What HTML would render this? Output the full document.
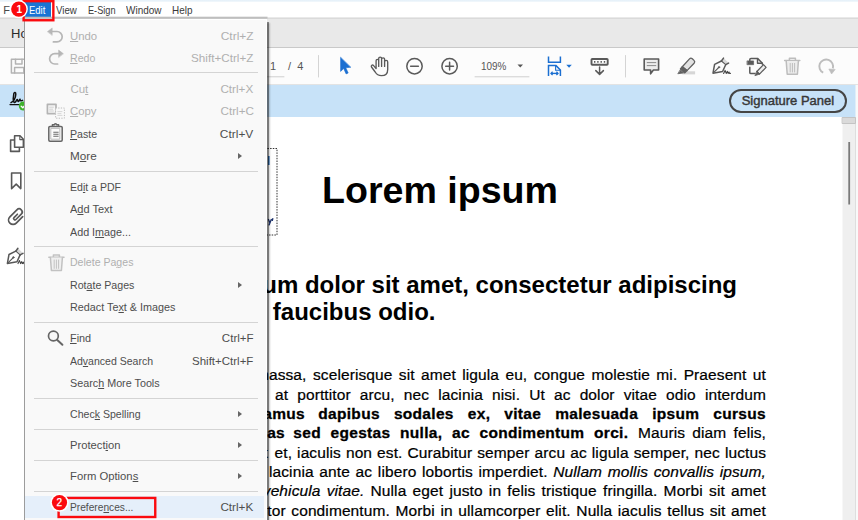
<!DOCTYPE html>
<html>
<head>
<meta charset="utf-8">
<title>Acrobat - Edit menu</title>
<style>
*{box-sizing:border-box;margin:0;padding:0}
html,body{width:858px;height:520px;overflow:hidden;background:#fff}
body{position:relative;font-family:"Liberation Sans",sans-serif;color:#444}
.abs{position:absolute}
/* top chrome */
#menubar{left:0;top:0;width:858px;height:18px;background:#fff}
#menubar span{position:absolute;top:3px;font-size:11px;line-height:14px;color:#3a3a3a;white-space:nowrap;transform-origin:0 50%;display:inline-block}
#topstrip{left:0;top:0;width:858px;height:2px;background:linear-gradient(#e3eff9,#f3f8fc)}
#tabbar{left:0;top:18px;width:858px;height:30px;background:#e9e9e9;border-bottom:1px solid #c9c9c9}
#tabbar span{position:absolute;left:11px;top:7.500px;font-size:13px;line-height:16px;color:#2a2a2a}
#toolbar{left:0;top:48px;width:858px;height:37px;background:#fcfcfc;border-bottom:1px solid #e3e3e3}
#sigbar{left:0;top:85px;width:858px;height:32px;background:#c7e2f8}
#docarea{left:0;top:117px;width:858px;height:403px;background:#fff}
#scroll{left:842px;top:117px;width:16px;height:403px;background:#f0f0f0}
#sigbtn{left:729px;top:89.3px;width:118px;height:24px;border:2px solid #454545;border-radius:12px;font-size:13.2px;line-height:20px;text-align:center;color:#383838;white-space:nowrap;-webkit-text-stroke:.45px #383838}
#sigbtn span{display:inline-block;transform:scaleX(.985);transform-origin:50% 50%}
.tbt{font-size:11px;line-height:14px;color:#555;white-space:nowrap}
/* document text */
.h1{left:114px;top:167px;width:652px;text-align:center;font-weight:bold;font-size:37.6px;line-height:46px;color:#000;white-space:nowrap}
.h2{font-weight:bold;font-size:24px;line-height:28px;color:#000;white-space:nowrap}
.ln{font-size:15.5px;line-height:19px;color:#000;text-align:justify;text-align-last:justify;white-space:nowrap;letter-spacing:.1px;-webkit-text-stroke:.22px #000}
.ln b,.lp b{letter-spacing:.3px;-webkit-text-stroke:.3px #000}
.lp{font-size:15.5px;line-height:19px;color:#000;white-space:nowrap;text-align:right;letter-spacing:.1px;-webkit-text-stroke:.22px #000}
/* menu */
#menu{left:24px;top:19px;width:243px;height:501px;background:#f9f9f9;border-left:1px solid #9c9c9c;border-right:1px solid #fff;border-top:1px solid #fff;box-shadow:2px 3px 0 0 rgba(0,0,0,.4),3px 4px 1.500px rgba(0,0,0,.2)}
#hl{position:absolute;left:0;top:475.500px;width:239px;height:22.500px;background:#e5effa}
.mi{position:absolute;left:0;width:242px;height:22px;font-size:11.5px;line-height:22px;color:#4e4e4e;white-space:nowrap}
.mi .t{position:absolute;left:45.4px;top:0;display:inline-block;transform-origin:0 50%}
.mi .k{position:absolute;right:13.5px;top:0;display:inline-block;transform-origin:100% 50%}
.mi.d{color:#b0b0b0}
.mi u{text-decoration:underline;text-decoration-thickness:1px;text-underline-offset:.8px}
.sep{position:absolute;left:9px;width:224px;height:1px;background:#d4d4d4}
.arr{position:absolute;left:213px;top:8px;width:0;height:0;border-left:4px solid #666;border-top:3px solid transparent;border-bottom:3px solid transparent}
</style>
</head>
<body>
<div class="abs" id="menubar">
  <span style="left:3.200px;color:#4a4a4a">F</span>
  <span style="left:56.3px;transform:scaleX(0.879)">View</span>
  <span style="left:87.6px;transform:scaleX(0.833)">E-Sign</span>
  <span style="left:125.9px;transform:scaleX(0.907)">Window</span>
  <span style="left:172.1px;transform:scaleX(0.902)">Help</span>
</div>
<div class="abs" id="topstrip"></div>
<div class="abs" id="tabbar"><span>Ho</span></div>
<div class="abs" id="toolbar"></div>
<div class="abs" id="sigbar"></div>
<div class="abs" id="docarea"></div>
<div class="abs" id="sigbtn"><span>Signature Panel</span></div>

<!-- toolbar text -->
<div class="abs tbt" style="left:270px;top:59px">1</div>
<div class="abs tbt" style="left:288px;top:59px">/&nbsp; 4</div>
<div class="abs tbt" style="left:481px;top:59px;transform:scaleX(.9);transform-origin:0 50%">109%</div>

<!-- chrome icons -->
<svg class="abs" style="left:0;top:0" width="858" height="520" viewBox="0 0 858 520" fill="none" stroke-linecap="round" stroke-linejoin="round">
  <rect x="0" y="17.500" width="858" height="1.200" fill="#d3d3d3" stroke="none"/>
  <!-- page-number and zoom underlines, dividers -->
  <path d="M262 76.8H284M475 76.8H529" stroke="#cfcfcf" stroke-width="1"/>
  <path d="M318.5 55.5V77M625.5 55.5V77" stroke="#d4d4d4" stroke-width="1"/>
  <!-- save (disabled) -->
  <g stroke="#b4b4b4" stroke-width="1.5">
    <path d="M11.4 59.2H24.5L27 61.7V73H11.4Z"/>
    <path d="M15.5 59.2V64H22V59.2"/>
    <path d="M14.6 73V67.6H23.8V73"/>
  </g>
  <!-- select arrow -->
  <path d="M340.6 57.6V71.4L343.7 68.5L346.1 73.9L348.2 73L345.8 67.7L350.5 67.3Z" fill="#1b6fd1" stroke="#1b6fd1" stroke-width=".6"/>
  <!-- hand -->
  <g stroke="#5a5a5a" stroke-width="1.350">
    <path d="M376.100 68.400V60.700a1.300 1.300 0 0 1 2.600 0V66.400M378.700 60.600V58.500a1.450 1.450 0 0 1 2.900 0V66.400M381.600 59.300a1.500 1.500 0 0 1 3 0V66.400M384.600 62a1.550 1.550 0 0 1 3.100 0V69.400c0 4-2.500 6.200-6.300 6.200c-3.200 0-4.900-1.400-6.200-3.600L371.500 67c-.900-1.600 1-2.700 2.100-1.400L376.100 68.600"/>
  </g>
  <!-- zoom out / in -->
  <g stroke="#5a5a5a" stroke-width="1.5">
    <circle cx="414.5" cy="66.2" r="7.7"/>
    <path d="M410.6 66.2H418.4"/>
    <circle cx="449.6" cy="66.2" r="7.7"/>
    <path d="M445.7 66.2H453.5M449.6 62.3V70.1"/>
  </g>
  <!-- zoom dropdown caret -->
  <path d="M517.5 64.5H523L520.25 67.6Z" fill="#555"/>
  <!-- fit width (blue) -->
  <g stroke="#1b6fd1" stroke-width="1.5" stroke-linecap="butt" stroke-linejoin="miter">
    <path d="M548.5 56.6V62.2H560.4V56.6"/>
    <path d="M548.5 76V65.6H556L560.4 70V76"/>
    <path d="M555.6 65.8V70.3H560.2" stroke-width="1.1"/>
    <path d="M551 73.400H558" stroke-width="1.400"/>
    <path d="M552.6 71.8L551 73.4L552.6 75M556.4 71.8L558 73.4L556.4 75" stroke-width="1.300"/>
  </g>
  <path d="M566.3 64.7H571.8L569.05 67.7Z" fill="#1b6fd1"/>
  <!-- scrolling/keyboard down -->
  <g stroke="#5a5a5a" stroke-width="1.5">
    <rect x="591.500" y="59" width="16.200" height="5.800" rx=".800" stroke-width="1.900"/>
    <path d="M599.6 67V74M595.8 70.6L599.6 74.4L603.4 70.6"/>
  </g>
  <path d="M594 61.900h1.400M597.200 61.900h1.400M600.500 61.900h1.400M603.800 61.900h1.400" stroke="#5a5a5a" stroke-width="1.600" stroke-linecap="butt"/>
  <!-- comment -->
  <path d="M644.2 59H658.6V70H653.4L650.6 73.8V70H644.2Z" fill="#ececec" stroke="#5a5a5a" stroke-width="1.6"/>
  <path d="M647.2 62.6H655.8M647.2 65.6H655.8" stroke="#8a8a8a" stroke-width="1"/>
  <!-- highlighter -->
  <rect x="682.400" y="71.300" width="12.700" height="3.100" fill="#d6d6d6" stroke="none"/>
  <g stroke="#606060" stroke-width="1.300">
    <path d="M682.300 66.700L689.500 58.900a2 2 0 0 1 2.800 -.100l1.700 1.600a2 2 0 0 1 .100 2.800L687 70.600Z" fill="#e2e2e2"/>
    <path d="M682.300 66.700L687 70.600L684.800 72.900L680.400 69Z" fill="#606060"/>
    <path d="M680.400 70.200L683.400 72.900L678.200 73.700Z" fill="#606060" stroke-width=".800"/>
  </g>
  <!-- fill & sign pen -->
  <path d="M721.500 60.800L723.600 58L728.700 63.100L725.800 64.900Z" fill="#d9d9d9" stroke="none"/>
  <g stroke="#5a5a5a" stroke-width="1.500">
    <path d="M721.400 61L714.600 64.300L713 73.200L722.600 71.500L725.700 64.700"/>
    <path d="M721.400 61L723.500 58.100M725.700 64.700L728.600 63.100"/>
    <path d="M721.400 61L725.700 64.700" stroke-width="1.100"/>
    <path d="M713.600 72.700L718.600 67.600" stroke-width="1.200"/>
    <circle cx="719" cy="67.200" r=".800" fill="#5a5a5a" stroke-width=".600"/>
    <path d="M723.600 73.400l1.500-3l1.100 3l1.200-2l.700 2l.900-1.400l.500 1.400h.900" stroke-width="1.100" stroke="#444"/>
  </g>
  <!-- edit pdf doc -->
  <g stroke="#5a5a5a" stroke-width="1.500">
    <path d="M749.800 60.400V59.600a1.200 1.200 0 0 1 1.200 -1.200H757.500L762.400 63.300V64.200"/>
    <path d="M757.500 58.600V63.200H762.200" stroke-width="1.400"/>
    <path d="M749.800 67.200V72.400a1.200 1.200 0 0 0 1.200 1.200H754.800"/>
    <rect x="747.300" y="60.900" width="6.300" height="3.800" fill="#5a5a5a" stroke-width=".600"/>
    <path d="M763.500 64.700L766.100 67.300L759.500 74.100L756.900 71.500Z" fill="#eee" stroke-width="1.200"/>
    <path d="M756.900 71.500L759.500 74.100L755.300 75.600Z" fill="#5a5a5a" stroke-width=".800"/>
  </g>
  <!-- delete (disabled) -->
  <g stroke="#bdbdbd" stroke-width="1.5">
    <path d="M784.6 60.6H799.8"/>
    <path d="M789.4 60.4V58.3H795.4V60.4"/>
    <path d="M786.2 61L787.2 74.2H797.4L798.4 61" fill="#ededed"/>
    <path d="M790.2 63.4V72M792.4 63.4V72M794.6 63.4V72" stroke-width="1"/>
  </g>
  <!-- rotate (disabled) -->
  <g stroke="#bdbdbd" stroke-width="1.9" stroke-linecap="butt">
    <path d="M823.2 72.6A6.9 6.9 0 1 1 832.8 68.4"/>
    <path d="M828.8 69L835.2 69.4L831.6 74Z" fill="#bdbdbd" stroke-width=".6"/>
  </g>
  <!-- signature badge -->
  <path d="M11 102.6c2.2-1.2 4.6-4.8 4.8-8.4c.1-2-1.500-2.400-2-.4c-.6 2.800-.6 6.600 0 8.200c.5 1 1.600 .4 2.400-1.200c.6-1.200 1.200-1.800 1.400-.6c.2 1.400 .8 1.800 1.600 .4l.8-1.400c.2 1.600 1 2 2.600 1.200" stroke="#111" stroke-width="1.5"/>
  <path d="M10 104.6H19.4" stroke="#111" stroke-width="1.3"/>
  <circle cx="23.4" cy="106" r="4.6" fill="#3fb22c" stroke="none"/>
  <path d="M21.2 106.2L22.8 107.8L25.6 104.6" stroke="#fff" stroke-width="1.3"/>
  <!-- nav pane icons -->
  <g stroke="#585858" stroke-width="1.6">
    <path d="M14 140H10.600V151.400H19.400V148.400"/>
    <path d="M14.600 135.800H20L23.400 139.200V147.200H14.600Z" fill="#fff"/>
    <path d="M19.800 136V139.600H23.200" stroke-width="1.100"/>
    <path d="M11.600 173H20.800V188.600L16.200 184.200L11.600 188.600Z"/>
    <path d="M22.68 216.71L16.25 223.15A4.5 4.5 0 0 1 9.89 216.78L16.89 209.78A3.1 3.1 0 0 1 21.27 214.17L15.93 219.51A1.35 1.35 0 0 1 14.02 217.60L17.38 214.24" stroke-width="1.700"/>
  </g>
  <g transform="translate(-705.600 190.200)">
  <path d="M721.500 60.800L723.600 58L728.700 63.100L725.800 64.900Z" fill="#d9d9d9" stroke="none"/>
  <g stroke="#585858" stroke-width="1.500">
    <path d="M721.400 61L714.600 64.300L713 73.200L722.600 71.500L725.700 64.700"/>
    <path d="M721.400 61L723.500 58.100M725.700 64.700L728.600 63.100"/>
    <path d="M721.400 61L725.700 64.700" stroke-width="1.100"/>
    <path d="M713.600 72.700L718.600 67.600" stroke-width="1.200"/>
    <circle cx="719" cy="67.200" r=".800" fill="#585858" stroke-width=".600"/>
    <path d="M723.600 73.400l1.500-3l1.100 3l1.200-2l.700 2l.900-1.400l.500 1.400h.900" stroke-width="1.100" stroke="#444"/>
  </g>
  </g>
  <!-- scrollbar bits -->
  <rect x="842.500" y="117" width="13" height="403" fill="#efefef" stroke="none"/>
  <rect x="855.500" y="85" width="2.500" height="435" fill="#f9f9f9" stroke="none"/>
  <rect x="855" y="117" width="1" height="403" fill="#dedede" stroke="none"/>
  <rect x="842.500" y="117.500" width="13" height="6" fill="#dadada" stroke="#c4c4c4" stroke-width="1"/>
  <path d="M849.200 142V204.500" stroke="#7a7a7a" stroke-width="1.800" stroke-linecap="butt"/>
  <!-- dotted field on page -->
  <path d="M262 148.500H277V235H262" stroke="#333" stroke-width="1" stroke-dasharray="1.500 1.200" stroke-linecap="butt"/>
  <path d="M268.800 156V165" stroke="#2a6db5" stroke-width="1.600" stroke-linecap="butt"/>
  <path d="M268.500 219.500l1.400 3.400l1.400-3.400M269.900 222.900l-.8 2M272.800 218.600l-.4 1.800" stroke="#1a2f6a" stroke-width="1.300"/>
</svg>

<!-- document -->
<div class="abs h1">Lorem ipsum</div>
<div class="abs h2" style="top:270.500px;right:121px">Lorem ipsum dolor sit amet, consectetur adipiscing</div>
<div class="abs h2" style="top:297.500px;left:124.800px">elit. Nunc ac faucibus odio.</div>

<div class="abs lp" style="top:365.400px;right:551.500px">Vestibulum neque massa,</div>
<div class="abs ln" style="top:365.400px;left:313px;width:453px">scelerisque sit amet ligula eu, congue molestie mi. Praesent ut</div>
<div class="abs ln" style="top:384.700px;left:275px;width:491px">at porttitor arcu, nec lacinia nisi. Ut ac dolor vitae odio interdum</div>
<div class="abs lp" style="top:404.100px;right:553px"><b>condimentum. Vivamus</b></div>
<div class="abs ln" style="top:404.100px;left:318.300px;width:447.700px"><b>dapibus sodales ex, vitae malesuada ipsum cursus</b></div>
<div class="abs lp" style="top:423.400px;right:573px"><b>convallis. Maecenas</b></div>
<div class="abs ln" style="top:423.400px;left:293.300px;width:335px"><b>sed egestas nulla, ac condimentum orci.</b></div>
<div class="abs ln" style="top:423.400px;left:638px;width:128px">Mauris diam felis,</div>
<div class="abs lp" style="top:442.800px;right:590px">vulputate ac suscipit</div>
<div class="abs ln" style="top:442.800px;left:274.500px;width:491.500px">et, iaculis non est. Curabitur semper arcu ac ligula semper, nec luctus</div>
<div class="abs ln" style="top:462.100px;left:269px;width:497px">lacinia ante ac libero lobortis imperdiet. <i>Nullam mollis convallis ipsum,</i></div>
<div class="abs ln" style="top:481.400px;left:262.800px;width:503.200px"><i>vehicula vitae.</i> Nulla eget justo in felis tristique fringilla. Morbi sit amet</div>
<div class="abs ln" style="top:500.800px;left:267.300px;width:498.700px">tor condimentum. Morbi in ullamcorper elit. Nulla iaculis tellus sit amet</div>

<!-- menu -->
<div class="abs" id="menu">
  <div id="hl"></div>
  <div class="mi d" style="top:4.5px"><span class="t" style="transform:scaleX(0.989)"><u>U</u>ndo</span><span class="k" style="transform:scaleX(1.040)">Ctrl+Z</span></div>
  <div class="mi d" style="top:26.8px"><span class="t" style="transform:scaleX(0.920)"><u>R</u>edo</span><span class="k" style="transform:scaleX(1.015)">Shift+Ctrl+Z</span></div>
  <div class="mi d" style="top:57.9px"><span class="t" style="transform:scaleX(1.000)">Cu<u>t</u></span><span class="k" style="transform:scaleX(1.019)">Ctrl+X</span></div>
  <div class="mi d" style="top:80.4px"><span class="t" style="transform:scaleX(0.987)"><u>C</u>opy</span><span class="k" style="transform:scaleX(1.015)">Ctrl+C</span></div>
  <div class="mi" style="top:102.5px"><span class="t" style="transform:scaleX(0.924)"><u>P</u>aste</span><span class="k" style="transform:scaleX(1.035)">Ctrl+V</span></div>
  <div class="mi" style="top:124.8px"><span class="t" style="transform:scaleX(1.019)">M<u>o</u>re</span><i class="arr"></i></div>
  <div class="mi" style="top:155.9px"><span class="t" style="transform:scaleX(0.917)">Ed<u>i</u>t a PDF</span></div>
  <div class="mi" style="top:178.4px"><span class="t" style="transform:scaleX(0.956)">A<u>d</u>d Text</span></div>
  <div class="mi" style="top:200.5px"><span class="t" style="transform:scaleX(0.935)">Add I<u>m</u>age...</span></div>
  <div class="mi d" style="top:231.4px"><span class="t" style="transform:scaleX(0.918)">Delete Pa<u>g</u>es</span></div>
  <div class="mi" style="top:253.9px"><span class="t" style="transform:scaleX(0.924)">Rot<u>a</u>te Pages</span><i class="arr"></i></div>
  <div class="mi" style="top:276.4px"><span class="t" style="transform:scaleX(0.939)">Redact Te<u>x</u>t &amp; Images</span></div>
  <div class="mi" style="top:307.3px"><span class="t" style="transform:scaleX(0.943)"><u>F</u>ind</span><span class="k" style="transform:scaleX(1.006)">Ctrl+F</span></div>
  <div class="mi" style="top:329.8px"><span class="t" style="transform:scaleX(0.914)">Ad<u>v</u>anced Search</span><span class="k" style="transform:scaleX(0.999)">Shift+Ctrl+F</span></div>
  <div class="mi" style="top:351.9px"><span class="t" style="transform:scaleX(0.937)">Searc<u>h</u> More Tools</span></div>
  <div class="mi" style="top:383.3px"><span class="t" style="transform:scaleX(0.919)">Chec<u>k</u> Spelling</span><i class="arr"></i></div>
  <div class="mi" style="top:413.8px"><span class="t" style="transform:scaleX(0.975)">Protect<u>i</u>on</span><i class="arr"></i></div>
  <div class="mi" style="top:445.2px"><span class="t" style="transform:scaleX(0.980)">Form Option<u>s</u></span><i class="arr"></i></div>
  <div class="mi" style="top:475.5px"><span class="t" style="transform:scaleX(0.886)">Prefere<u>n</u>ces...</span><span class="k" style="transform:scaleX(1.019)">Ctrl+K</span></div>
  <div class="sep" style="top:52.0px"></div>
  <div class="sep" style="top:150.7px"></div>
  <div class="sep" style="top:226.2px"></div>
  <div class="sep" style="top:302.0px"></div>
  <div class="sep" style="top:377.9px"></div>
  <div class="sep" style="top:409.0px"></div>
  <div class="sep" style="top:439.6px"></div>
  <div class="sep" style="top:470.7px"></div>
  <svg class="abs" style="left:-25px;top:-20px" width="268" height="521" viewBox="0 0 268 521" fill="none" stroke-linecap="round" stroke-linejoin="round">
    <!-- undo / redo -->
    <g stroke="#b6b6b6" stroke-width="1.700">
      <path d="M51 31.500H57A5.200 5.200 0 0 1 57 41.900H53.400"/>
      <path d="M47.600 31.500L52.200 27.900V35.100Z" fill="#b6b6b6" stroke-width=".5"/>
      <path d="M60 53.600H54.800A5.200 5.200 0 0 0 54.800 64H57.600"/>
      <path d="M63.200 53.600L58.600 50V57.200Z" fill="#b6b6b6" stroke-width=".5"/>
    </g>
    <!-- copy (disabled) -->
    <rect x="47.400" y="104.300" width="8.600" height="9.300" stroke="#b4b4b4" stroke-width="1.700" fill="#f6f6f6"/>
    <path d="M49.600 107.200H53.400M49.600 109.200H52.600M49.600 111H53.400" stroke="#cfcfcf" stroke-width=".9"/>
    <rect x="55.600" y="108" width="8.800" height="10.200" stroke="#bdbdbd" stroke-width="1" stroke-dasharray="1.300 1.300" fill="#f9f9f9" stroke-linecap="butt"/>
    <path d="M57.800 111.600H62M57.800 113.600H61M57.800 115.400H62" stroke="#d4d4d4" stroke-width=".9"/>
    <!-- paste -->
    <g stroke="#666" stroke-width="1.500">
      <rect x="48.800" y="126.400" width="13.400" height="14.800" rx="1.200"/>
      <path d="M52.400 126.200V124.800H54.400a1.100 1.100 0 0 1 2.200 0H58.600V126.200"/>
      <rect x="51.200" y="128.400" width="8.600" height="10.800" stroke="#b9b9b9" stroke-width=".900" fill="#fcfcfc"/>
      <path d="M53.300 132.200H58.600M53.300 134.200H58.600M53.300 136.200H58.600" stroke="#6a6a6a" stroke-width="1.100" stroke-linecap="butt"/>
    </g>
    <!-- delete pages (disabled) -->
    <g stroke="#c2c2c2" stroke-width="1.500">
      <path d="M48.800 257.200H64"/>
      <path d="M53.400 257V254.900H59.400V257"/>
      <path d="M50.400 257.600L51.400 270.400H61.400L62.400 257.600" fill="#f0f0f0"/>
      <path d="M54.200 260V268.400M56.400 260V268.400M58.600 260V268.400" stroke-width="1"/>
    </g>
    <!-- find -->
    <circle cx="53.400" cy="336" r="4.900" stroke="#666" stroke-width="1.700"/>
    <path d="M57 339.800L62.400 344.800" stroke="#666" stroke-width="2"/>
  </svg>
</div>

<!-- annotations -->
<div class="abs" style="left:24.800px;top:2.300px;width:26.300px;height:15.300px;background:#1a74d4"></div>
<div class="abs" style="left:29.400px;top:3px;font-size:11px;line-height:14px;color:#fff;white-space:nowrap;transform:scaleX(0.859);transform-origin:0 50%">Edit</div>
<svg class="abs" style="left:0;top:0" width="858" height="520" viewBox="0 0 858 520" fill="none">
  <rect x="24" y="16.700" width="243.500" height="2" fill="#bebebe" stroke="none"/>
  <rect x="23.600" y="1.150" width="29.750" height="19.100" stroke="#fb0a0e" stroke-width="2.400"/>
  <circle cx="18.800" cy="9.100" r="9.100" fill="#fff"/>
  <circle cx="18.800" cy="9.100" r="7.650" fill="#fb0a0e"/>
  <text x="19.300" y="13" font-family="Liberation Sans, sans-serif" font-size="10" font-weight="bold" fill="#fff" text-anchor="middle">1</text>
  <rect x="58.600" y="497.950" width="96.650" height="19.050" stroke="#fb0a0e" stroke-width="2.400"/>
  <circle cx="59.500" cy="502.600" r="9.250" fill="#fff"/>
  <circle cx="59.500" cy="502.600" r="7.600" fill="#fb0a0e"/>
  <text x="59.300" y="506.400" font-family="Liberation Sans, sans-serif" font-size="10" fill="#fff" stroke="#fff" stroke-width=".25" text-anchor="middle">2</text>
</svg>
</body>
</html>
